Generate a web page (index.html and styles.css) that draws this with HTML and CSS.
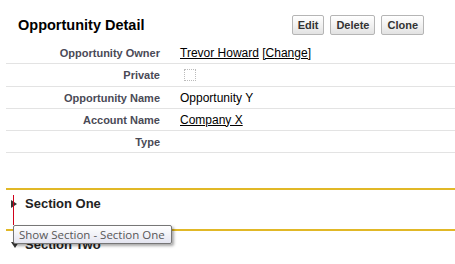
FILE: index.html
```html
<!DOCTYPE html>
<html lang="en">
<head>
  <meta charset="UTF-8" />
  <meta name="viewport" content="width=device-width, initial-scale=1.0" />
  <title>Opportunity Detail</title>
  <link rel="stylesheet" href="styles.css">
</head>
<body>
  <div class="page-block">
    <div class="block-header">
      <h2 class="block-title">Opportunity Detail</h2>
      <div class="block-buttons">
        <button class="btn">Edit</button>
        <button class="btn">Delete</button>
        <button class="btn">Clone</button>
      </div>
    </div>

    <div class="detail-list">
      <div class="detail-row">
        <div class="label">Opportunity Owner</div>
        <div class="value"><a href="#">Trevor Howard</a> <a href="#">[Change]</a></div>
      </div>
      <div class="detail-row detail-row-tall">
        <div class="label">Private</div>
        <div class="value"><span class="checkbox"></span></div>
      </div>
      <div class="detail-row">
        <div class="label">Opportunity Name</div>
        <div class="value">Opportunity Y</div>
      </div>
      <div class="detail-row">
        <div class="label">Account Name</div>
        <div class="value"><a href="#">Company X</a></div>
      </div>
      <div class="detail-row">
        <div class="label">Type</div>
        <div class="value"></div>
      </div>
    </div>

    <div class="sections">
      <div class="section">
        <h3 class="section-title"><span class="twist twist-closed"></span>Section One</h3>
      </div>
      <div class="section">
        <h3 class="section-title"><span class="twist twist-open"></span>Section Two</h3>
      </div>

      <!-- hover tooltip over section one -->
      <div class="hover-mark"></div>
      <div class="tooltip">Show Section - Section One</div>
    </div>
  </div>
</body>
</html>
```

FILE: styles.css
```css
* {
  margin: 0;
  padding: 0;
  box-sizing: border-box;
}
body {
  background-color: #fff;
  font-family: 'Liberation Sans', Arial, sans-serif;
  font-size: 12px;
  color: #000;
  overflow: hidden;
}
.page-block {
  padding-left: 6px;
}
.block-header {
  display: flex;
  align-items: center;
  height: 42px;
  padding: 8px 31px 0 12px;
}
.block-title {
  flex: 1;
  font-size: 14.5px;
  font-weight: bold;
  color: #000;
}
.block-buttons {
  display: flex;
  gap: 6px;
}
.btn {
  font-family: 'Liberation Sans', Arial, sans-serif;
  font-size: 11px;
  font-weight: bold;
  color: #333;
  height: 20px;
  padding: 0 5px;
  border: 1px solid #b5b5b5;
  border-radius: 2px;
  background: linear-gradient(to bottom, #fff, #efefef 60%, #e2e2e2);
}
.detail-row {
  display: flex;
  align-items: center;
  height: 22px;
  border-bottom: 1px solid #e3e3e3;
}
.detail-row-tall {
  height: 23px;
}
.label {
  width: 154px;
  text-align: right;
  font-size: 11px;
  font-weight: bold;
  color: #4a4a56;
}
.value {
  margin-left: 20px;
  font-size: 12px;
  color: #000;
}
.value a {
  color: #000;
  text-decoration: underline;
}
.checkbox {
  display: block;
  width: 12px;
  height: 12px;
  margin-left: 4px;
  border: 1px dotted #bbb;
}
.sections {
  position: relative;
  margin-top: 35px;
}
.section {
  height: 41px;
  border-top: 2px solid #e1b826;
  padding: 6px 0 0 5px;
}
.section-title {
  display: flex;
  align-items: center;
  font-size: 13px;
  font-weight: bold;
  color: #222;
}
.twist {
  display: inline-block;
  width: 0;
  height: 0;
  margin-right: 8px;
}
.twist-closed {
  border-top: 4px solid transparent;
  border-bottom: 4px solid transparent;
  border-left: 6px solid #333;
}
.twist-open {
  border-left: 4px solid transparent;
  border-right: 4px solid transparent;
  border-top: 6px solid #333;
  margin-right: 6px;
}
.hover-mark {
  position: absolute;
  left: 7px;
  top: 7px;
  width: 1px;
  height: 30px;
  background: #d0021b;
}
.tooltip {
  position: absolute;
  left: 7px;
  top: 37px;
  width: 159px;
  height: 19px;
  padding: 0 0 0 5px;
  font-family: 'Open Sans', sans-serif;
  font-size: 11.5px;
  line-height: 17px;
  color: #575757;
  white-space: nowrap;
  border: 1px solid #767676;
  border-radius: 2px;
  background: linear-gradient(to bottom, #fff, #e4e5f0);
  box-shadow: 2px 2px 3px rgba(0, 0, 0, 0.35);
}
```
